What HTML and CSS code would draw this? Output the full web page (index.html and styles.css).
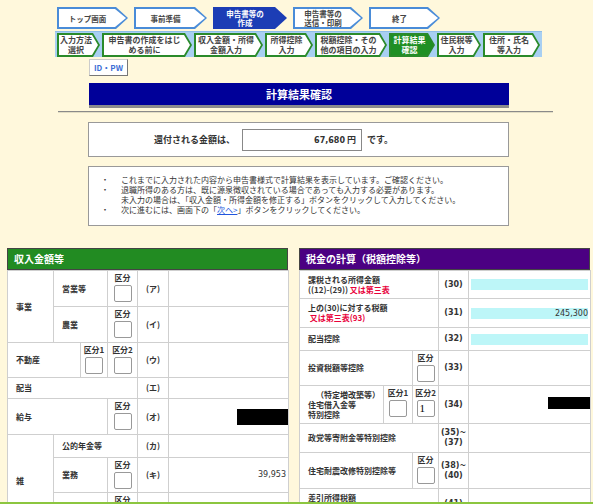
FILE: index.html
```html
<!DOCTYPE html>
<html lang="ja">
  <head>
    <meta charset="UTF-8" />
    <title>計算結果確認</title>
    <link rel="stylesheet" href="styles.css">
  </head>
  <body>
    <div class="steps">
      <div class="main-steps">
        <div class="step" style="width:71px"><span>トップ画面</span></div>
        <div class="step" style="width:73px"><span>事前準備</span></div>
        <div class="step current" style="width:74px"><span>申告書等の<br>作成</span></div>
        <div class="step" style="width:70px"><span>申告書等の<br>送信・印刷</span></div>
        <div class="step" style="width:71px"><span>終了</span></div>
      </div>
      <div class="sub-steps">
        <div class="sub" style="width:43px"><span>入力方法<br>選択</span></div>
        <div class="sub" style="width:90px"><span>申告書の作成をはじ<br>める前に</span></div>
        <div class="sub" style="width:69px"><span>収入金額・所得<br>金額入力</span></div>
        <div class="sub" style="width:48px"><span>所得控除<br>入力</span></div>
        <div class="sub" style="width:72px"><span>税額控除・その<br>他の項目の入力</span></div>
        <div class="sub current" style="width:46px"><span>計算結果<br>確認</span></div>
        <div class="sub" style="width:44px"><span>住民税等<br>入力</span></div>
        <div class="sub" style="width:57px"><span>住所・氏名<br>等入力</span></div>
      </div>
    </div>

    <div class="content">
      <a class="idpw" href="#">ID・PW</a>
      <h1 class="title">計算結果確認</h1>
    </div>
    <div class="rule"></div>

    <div class="content">
      <div class="refund">
        <span class="refund-label">還付される金額は、</span>
        <span class="refund-value"><b class="num">67,680</b> 円</span>
        <span class="refund-tail">です。</span>
      </div>

      <ul class="notes">
        <li>これまでに入力された内容から申告書様式で計算結果を表示しています。ご確認ください。</li>
        <li>退職所得のある方は、既に源泉徴収されている場合であっても入力する必要があります。<br>未入力の場合は、「収入金額・所得金額を修正する」ボタンをクリックして入力してください。</li>
        <li>次に進むには、画面下の「<a href="#">次へ&gt;</a>」ボタンをクリックしてください。</li>
      </ul>
    </div>

    <div class="panels">
      <section class="panel income">
        <h2 class="panel-head">収入金額等</h2>
        <table class="grid">
          <colgroup>
            <col style="width:46px"><col style="width:27px"><col style="width:27px">
            <col style="width:30px"><col style="width:31px"><col style="width:120px">
          </colgroup>
          <tr style="height:36px">
            <td rowspan="2">事業</td>
            <td colspan="2">営業等</td>
            <td class="kubun">区分<div class="box"></div></td>
            <td class="code">(ア)</td>
            <td class="val"></td>
          </tr>
          <tr style="height:36px">
            <td colspan="2">農業</td>
            <td class="kubun">区分<div class="box"></div></td>
            <td class="code">(イ)</td>
            <td class="val"></td>
          </tr>
          <tr style="height:35px">
            <td colspan="2">不動産</td>
            <td class="kubun">区分1<div class="box"></div></td>
            <td class="kubun">区分2<div class="box"></div></td>
            <td class="code">(ウ)</td>
            <td class="val"></td>
          </tr>
          <tr style="height:21px">
            <td colspan="4">配当</td>
            <td class="code">(エ)</td>
            <td class="val"></td>
          </tr>
          <tr style="height:36px">
            <td colspan="3">給与</td>
            <td class="kubun">区分<div class="box"></div></td>
            <td class="code">(オ)</td>
            <td class="val"><div class="mask"></div></td>
          </tr>
          <tr style="height:23px">
            <td rowspan="3">雑</td>
            <td colspan="3">公的年金等</td>
            <td class="code">(カ)</td>
            <td class="val"></td>
          </tr>
          <tr style="height:35px">
            <td colspan="2">業務</td>
            <td class="kubun">区分<div class="box"></div></td>
            <td class="code">(キ)</td>
            <td class="val num">39,953</td>
          </tr>
          <tr style="height:35px">
            <td colspan="2">その他</td>
            <td class="kubun">区分<div class="box"></div></td>
            <td class="code">(ク)</td>
            <td class="val"></td>
          </tr>
        </table>
      </section>

      <section class="panel tax">
        <h2 class="panel-head">税金の計算（税額控除等）</h2>
        <table class="grid">
          <colgroup>
            <col style="width:84px"><col style="width:29px"><col style="width:26px">
            <col style="width:30px"><col style="width:122px">
          </colgroup>
          <tr style="height:28px">
            <td colspan="3">課税される所得金額<br>((12)-(29)) <span class="red">又は第三表</span></td>
            <td class="code num">(30)</td>
            <td class="val"><div class="calc"></div></td>
          </tr>
          <tr style="height:29px">
            <td colspan="3">上の(30)に対する税額<br>&nbsp;<span class="red">又は第三表(93)</span></td>
            <td class="code num">(31)</td>
            <td class="val"><div class="calc num">245,300</div></td>
          </tr>
          <tr style="height:23px">
            <td colspan="3">配当控除</td>
            <td class="code num">(32)</td>
            <td class="val"><div class="calc"></div></td>
          </tr>
          <tr style="height:35px">
            <td colspan="2">投資税額等控除</td>
            <td class="kubun">区分<div class="box"></div></td>
            <td class="code num">(33)</td>
            <td class="val"></td>
          </tr>
          <tr style="height:38px">
            <td>&emsp;（特定増改築等）<br>住宅借入金等<br>特別控除</td>
            <td class="kubun">区分1<div class="box"></div></td>
            <td class="kubun">区分2<div class="box filled">1</div></td>
            <td class="code num">(34)</td>
            <td class="val"><div class="mask small"></div></td>
          </tr>
          <tr style="height:29px">
            <td colspan="3">政党等寄附金等特別控除</td>
            <td class="code num">(35)~<br>(37)</td>
            <td class="val"></td>
          </tr>
          <tr style="height:36px">
            <td colspan="2">住宅耐震改修特別控除等</td>
            <td class="kubun">区分<div class="box"></div></td>
            <td class="code num">(38)~<br>(40)</td>
            <td class="val"></td>
          </tr>
          <tr style="height:30px">
            <td colspan="3" class="top">差引所得税額</td>
            <td class="code num">(41)</td>
            <td class="val"></td>
          </tr>
        </table>
      </section>
    </div>

    <div class="bottom-bar"></div>
  </body>
</html>
```

FILE: styles.css
```css
body {
  margin: 0;
  background-color: #fff8dc;
  font-family: "Noto Sans CJK JP", sans-serif;
  color: #333;
}
.num {
  font-family: "DejaVu Sans", sans-serif;
}

/* step navigation */
.steps {
  margin-left: 55px;
  width: 487px;
  padding-top: 7px;
}
.main-steps {
  display: flex;
  gap: 6px;
  padding-left: 2px;
}
.step {
  height: 22px;
  padding: 2px;
  box-sizing: border-box;
  background-color: #4a8cd8;
  clip-path: polygon(0 0, calc(100% - 12px) 0, 100% 50%, calc(100% - 12px) 100%, 0 100%);
}
.step span {
  display: flex;
  align-items: center;
  justify-content: center;
  height: 100%;
  padding-right: 10px;
  background-color: #fff;
  clip-path: polygon(0 0, calc(100% - 11px) 0, 100% 50%, calc(100% - 11px) 100%, 0 100%);
  font-size: 7.5px;
  line-height: 9px;
  font-weight: bold;
  text-align: center;
  color: #444;
}
.step.current {
  background-color: #1c3db5;
}
.step.current span {
  background-color: #1c3db5;
  color: #fff;
}
.sub-steps {
  display: flex;
  gap: 2px;
  margin-top: 2px;
  height: 26px;
  padding: 1px 2px;
  box-sizing: border-box;
  background-color: #a8cff2;
  border-top: 1px solid #8fbde8;
}
.sub {
  height: 24px;
  padding: 2px;
  box-sizing: border-box;
  background-color: #2a8a2a;
  clip-path: polygon(0 0, calc(100% - 7px) 0, 100% 50%, calc(100% - 7px) 100%, 0 100%);
}
.sub span {
  display: flex;
  align-items: center;
  justify-content: center;
  height: 100%;
  padding-right: 5px;
  background-color: #fff;
  clip-path: polygon(0 0, calc(100% - 6px) 0, 100% 50%, calc(100% - 6px) 100%, 0 100%);
  font-size: 8px;
  line-height: 10px;
  font-weight: bold;
  text-align: center;
  white-space: nowrap;
  color: #444;
}
.sub.current span {
  background-color: #1f8f24;
  color: #fff;
}

/* page title */
.content {
  margin-left: 88px;
  width: 421px;
}
.idpw {
  display: block;
  margin-top: 2px;
  margin-left: 1px;
  width: 39px;
  height: 17px;
  box-sizing: border-box;
  background-color: #fff;
  border: 1px solid #ccc;
  border-right-color: #777;
  border-bottom-color: #777;
  font-size: 8px;
  line-height: 15px;
  font-weight: bold;
  text-align: center;
  color: #3d6fd6;
  text-decoration: none;
}
.title {
  margin: 7px 0 0 1px;
  height: 22px;
  background-color: #000099;
  box-shadow: 0 3px 0 #8c8c8c;
  font-size: 11px;
  line-height: 22px;
  text-align: center;
  color: #fff;
}
.rule {
  margin: 6px 40px 0 58px;
  border-top: 1px solid #8a8a8a;
  border-bottom: 1px solid #e2ddc4;
}

/* refund amount */
.refund {
  display: flex;
  align-items: center;
  margin-top: 9px;
  height: 35px;
  padding-left: 65px;
  box-sizing: border-box;
  background-color: #fff;
  border: 1px solid #999;
  font-size: 9px;
  font-weight: bold;
}
.refund-value {
  margin-left: 7px;
  width: 120px;
  height: 22px;
  padding-right: 5px;
  box-sizing: border-box;
  border: 1px solid #888;
  line-height: 20px;
  text-align: right;
}
.refund-value .num {
  font-size: 8px;
}
.refund-tail {
  margin-left: 5px;
}

/* notes */
.notes {
  margin: 9px 0 0;
  height: 60px;
  padding: 8px 0 0 14px;
  box-sizing: border-box;
  background-color: #fff;
  border: 1px solid #999;
  list-style: none;
  font-size: 8px;
  line-height: 10px;
}
.notes li {
  position: relative;
  padding-left: 18px;
}
.notes li::before {
  content: "・";
  position: absolute;
  left: -2px;
}
.notes a {
  color: #2255dd;
}

/* result panels */
.panels {
  display: flex;
  gap: 11px;
  margin-top: 22px;
  padding-left: 7px;
}
.panel {
  background-color: #fff;
}
.income {
  width: 281px;
}
.tax {
  width: 291px;
}
.panel-head {
  margin: 0;
  height: 22px;
  padding-left: 6px;
  border: 1px solid #444;
  font-size: 10px;
  line-height: 20px;
  box-sizing: border-box;
  color: #fff;
}
.income .panel-head {
  background-color: #228b22;
}
.tax .panel-head {
  background-color: #4b0082;
}
.grid {
  width: 100%;
  table-layout: fixed;
  border-collapse: collapse;
}
.grid td {
  padding: 0 0 0 8px;
  border: 1px solid #cfcfcf;
  font-size: 8px;
  line-height: 10px;
  font-weight: bold;
  vertical-align: middle;
  white-space: nowrap;
  color: #333;
}
.grid td.top {
  vertical-align: top;
  padding-top: 4px;
}
.grid td.kubun {
  padding: 2px 0 0;
  vertical-align: top;
  text-align: center;
}
.box {
  width: 18px;
  height: 17px;
  margin: 2px auto 0;
  box-sizing: border-box;
  border: 1px solid #999;
  border-radius: 2px;
  font-family: "Liberation Serif", serif;
  font-size: 11px;
  font-weight: normal;
  line-height: 15px;
  text-align: left;
  padding-left: 2px;
  color: #000;
}
.grid td.code {
  padding: 0;
  text-align: center;
}
.grid td.val {
  padding: 0 2px;
  text-align: right;
  font-weight: normal;
  font-size: 8px;
}
.mask {
  width: 51px;
  height: 16px;
  margin: 0 -2px 0 auto;
  background-color: #000;
}
.mask.small {
  width: 42px;
  height: 12px;
  margin-top: -4px;
}
.calc {
  height: 11px;
  background-color: #bdf6f8;
  font-size: 8px;
  line-height: 11px;
  text-align: right;
}
.red {
  color: #e8003a;
}

.bottom-bar {
  position: fixed;
  left: 0;
  right: 0;
  bottom: 0;
  height: 2px;
  background-color: #8cc63f;
}
```
